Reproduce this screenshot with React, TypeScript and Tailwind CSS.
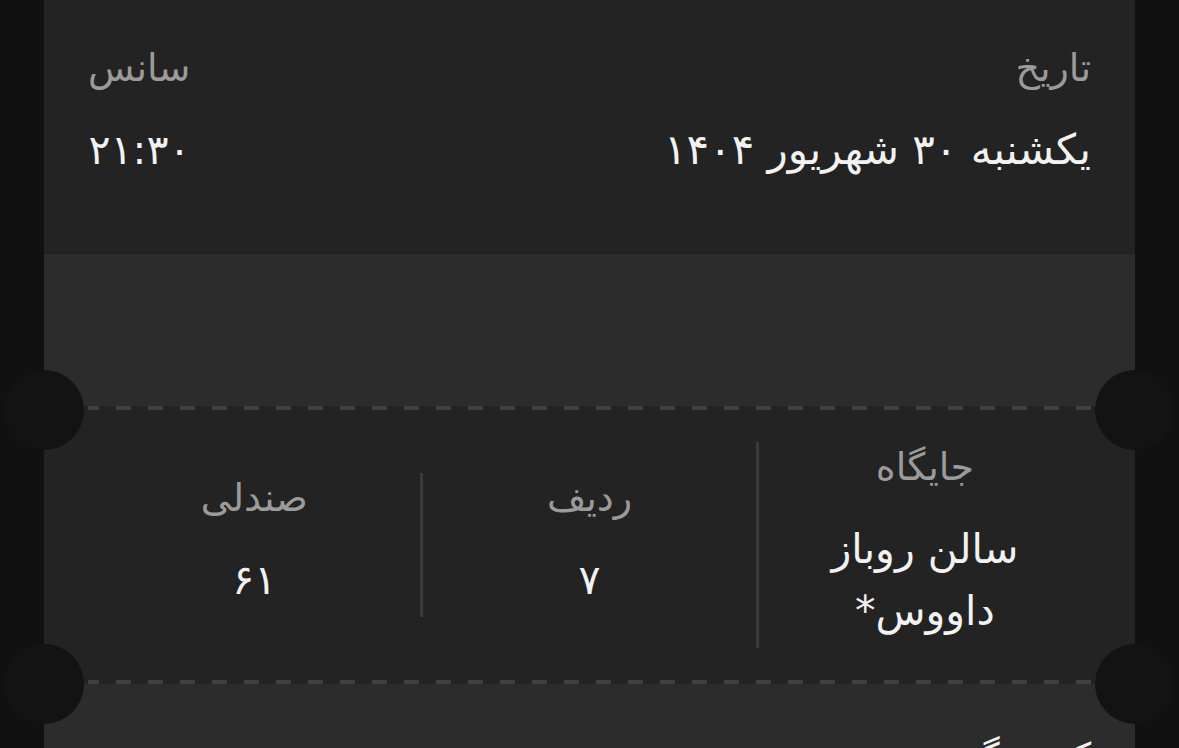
import React from "react";

function Notch({ side, top }: { side: "left" | "right"; top: string }) {
  return (
    <div
      className={
        "absolute w-[80px] h-[80px] rounded-full bg-[#131313] " +
        (side === "left" ? "left-[-40px] " : "right-[-40px] ") +
        top
      }
    />
  );
}

function DashRow() {
  return (
    <div className="h-[4px] shrink-0 bg-[#232323] px-[44px]">
      <div className="h-full bg-[repeating-linear-gradient(270deg,#404040_0px,#404040_15px,transparent_15px,transparent_32px)]" />
    </div>
  );
}

export default function App() {
  return (
    <div
      dir="rtl"
      className="h-[748px] w-full overflow-hidden bg-[#111111] flex justify-center font-['DejaVu_Sans',sans-serif]"
    >
      <div className="relative w-[1091px] flex flex-col h-[748px]">
        {/* top section */}
        <div className="h-[254px] shrink-0 bg-[#232323] flex justify-between px-[44px] pt-[43px] border-b border-[#1f1f1f]">
          <div className="flex flex-col items-start">
            <div className="text-[38px] leading-[50px] text-[#9b9b9b]">تاریخ</div>
            <div className="mt-[26px] text-[42px] leading-[62px] text-[#f2f2f2]">
              یکشنبه ۳۰ شهریور ۱۴۰۴
            </div>
          </div>
          <div className="flex flex-col items-start">
            <div className="text-[38px] leading-[50px] text-[#9b9b9b]">سانس</div>
            <div className="mt-[26px] text-[41px] leading-[62px] text-[#f2f2f2]">۲۱:۳۰</div>
          </div>
        </div>

        {/* blurred band */}
        <div className="h-[152px] shrink-0 bg-[#2c2c2c]" />

        <DashRow />

        {/* seat section */}
        <div className="h-[270px] shrink-0 bg-[#232323] flex items-center px-[44px]">
          <div className="flex-1 flex flex-col items-center border-l-[3px] border-[#3a3a3a] pb-[6px]">
            <div className="text-[38px] leading-[50px] text-[#9b9b9b]">جایگاه</div>
            <div className="mt-[26px] max-w-[250px] text-center text-[41px] leading-[62px] text-[#f2f2f2]">
              سالن روباز داووس*
            </div>
          </div>
          <div className="flex-1 flex flex-col items-center border-l-[3px] border-[#3a3a3a] pb-[6px]">
            <div className="text-[38px] leading-[50px] text-[#9b9b9b]">ردیف</div>
            <div className="mt-[26px] text-[41px] leading-[62px] text-[#f2f2f2]">۷</div>
          </div>
          <div className="flex-1 flex flex-col items-center pb-[6px]">
            <div className="text-[38px] leading-[50px] text-[#9b9b9b]">صندلی</div>
            <div className="mt-[26px] text-[41px] leading-[62px] text-[#f2f2f2]">۶۱</div>
          </div>
        </div>

        <DashRow />

        {/* bottom band */}
        <div className="flex-1 min-h-0 overflow-hidden bg-[#2c2c2c] px-[44px] pt-[48px]">
          <div className="text-[38px] leading-[50px] text-[#f2f2f2]">کد رهگیری</div>
        </div>

        <Notch side="left" top="top-[370px]" />
        <Notch side="right" top="top-[370px]" />
        <Notch side="left" top="top-[644px]" />
        <Notch side="right" top="top-[644px]" />
      </div>
    </div>
  );
}
